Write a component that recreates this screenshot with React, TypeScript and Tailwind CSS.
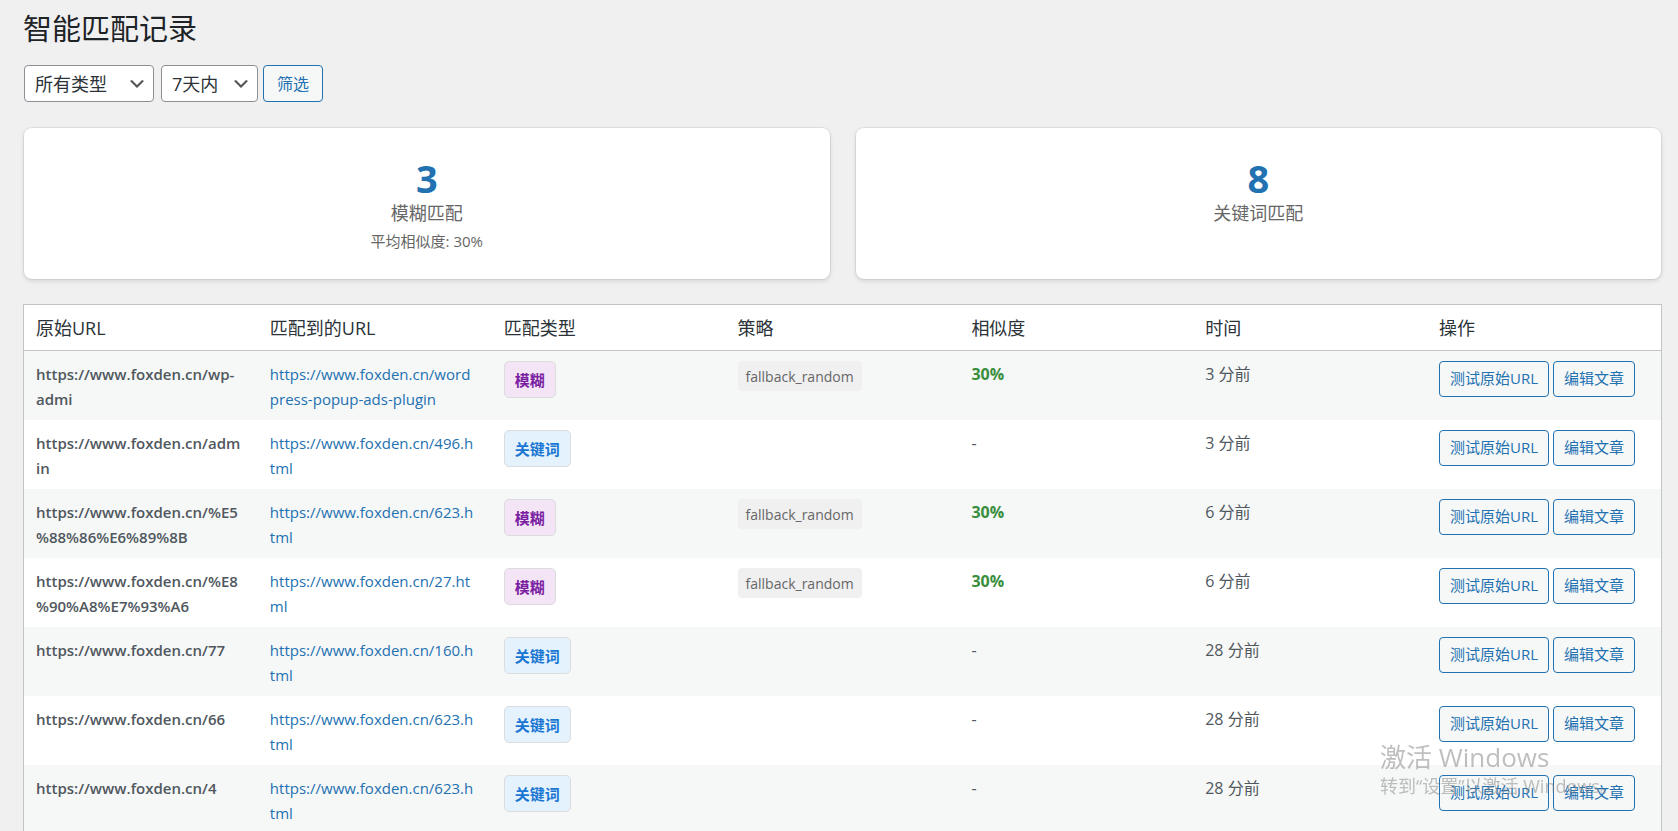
import { useState } from "react";

type MatchType = "fuzzy" | "keyword";

interface MatchRecord {
  id: number;
  source: string;
  target: string;
  type: MatchType;
  strategy?: string;
  similarity?: number;
  time: string;
}

const BASE = "https://www.foxden.cn";

const RECORDS: MatchRecord[] = [
  { id: 1, source: `${BASE}/wp-admi`, target: `${BASE}/wordpress-popup-ads-plugin`, type: "fuzzy", strategy: "fallback_random", similarity: 30, time: "3 分前" },
  { id: 2, source: `${BASE}/admin`, target: `${BASE}/496.html`, type: "keyword", time: "3 分前" },
  { id: 3, source: `${BASE}/%E5%88%86%E6%89%8B`, target: `${BASE}/623.html`, type: "fuzzy", strategy: "fallback_random", similarity: 30, time: "6 分前" },
  { id: 4, source: `${BASE}/%E8%90%A8%E7%93%A6`, target: `${BASE}/27.html`, type: "fuzzy", strategy: "fallback_random", similarity: 30, time: "6 分前" },
  { id: 5, source: `${BASE}/77`, target: `${BASE}/160.html`, type: "keyword", time: "28 分前" },
  { id: 6, source: `${BASE}/66`, target: `${BASE}/623.html`, type: "keyword", time: "28 分前" },
  { id: 7, source: `${BASE}/4`, target: `${BASE}/623.html`, type: "keyword", time: "28 分前" },
];

const COLUMNS = ["原始URL", "匹配到的URL", "匹配类型", "策略", "相似度", "时间", "操作"];

const TYPE_BADGE: Record<MatchType, { label: string; className: string }> = {
  fuzzy: { label: "模糊", className: "bg-[#f3e5f5] text-[#7b1fa2]" },
  keyword: { label: "关键词", className: "bg-[#e3f2fd] text-[#1976d2]" },
};

interface FilterSelectProps {
  label: string;
  value: string;
  options: { value: string; label: string }[];
  className: string;
  onChange: (value: string) => void;
}

function FilterSelect({ label, value, options, className, onChange }: FilterSelectProps) {
  return (
    <div className={`relative ${className}`}>
      <select
        aria-label={label}
        value={value}
        onChange={(e) => onChange(e.target.value)}
        className="h-[37px] w-full appearance-none rounded-[4px] border border-[#8c8f94] bg-white pt-[2px] pl-[10px] pr-8 text-[18px] text-[#2c3338]"
      >
        {options.map((o) => (
          <option key={o.value} value={o.value}>{o.label}</option>
        ))}
      </select>
      <svg viewBox="0 0 20 20" className="pointer-events-none absolute right-[7px] top-[9px] size-5 fill-[#555]">
        <path d="M5 6l5 5 5-5 2 1-7 7-7-7 2-1z" />
      </svg>
    </div>
  );
}

function StatCard({ value, label, note }: { value: number; label: string; note?: string }) {
  return (
    <div className="min-h-[151px] rounded-[8px] bg-white pt-[29px] text-center text-[#666] shadow-[0_0_0_1px_rgba(0,0,0,0.06),0_2px_5px_rgba(0,0,0,0.12)]">
      <div className="text-[38px] leading-[42px] font-bold text-[#2271b1]">{value}</div>
      <div className="text-[18px] leading-[28px]">{label}</div>
      {note && <div className="mt-[2px] text-[15px] leading-[25px]">{note}</div>}
    </div>
  );
}

function ActionLink({ href, children }: { href: string; children: string }) {
  return (
    <a
      href={href}
      className="h-9 rounded-[4px] border border-[#2271b1] bg-[#f6f7f7] px-[10px] text-[15px] leading-8 whitespace-nowrap text-[#2271b1]"
    >
      {children}
    </a>
  );
}

export default function App() {
  const [type, setType] = useState("all");
  const [days, setDays] = useState("7");

  return (
    <div className="min-h-screen bg-[#f0f0f1] pl-[23px] pr-4 font-['Open_Sans','Noto_Sans_CJK_SC',sans-serif] text-[#3c434a]">
      <h1 className="pt-[10px] text-[29px] leading-[38px] text-[#1d2327]">智能匹配记录</h1>

      <form className="mt-[17px] flex pl-px" onSubmit={(e) => e.preventDefault()}>
        <FilterSelect
          label="匹配类型"
          value={type}
          onChange={setType}
          className="mr-[7px] w-[130px]"
          options={[
            { value: "all", label: "所有类型" },
            { value: "fuzzy", label: "模糊" },
            { value: "keyword", label: "关键词" },
          ]}
        />
        <FilterSelect
          label="时间范围"
          value={days}
          onChange={setDays}
          className="mr-[5px] w-[97px]"
          options={[
            { value: "7", label: "7天内" },
            { value: "30", label: "30天内" },
          ]}
        />
        <button type="submit" className="h-[37px] w-[60px] rounded-[4px] border border-[#2271b1] bg-[#f6f7f7] text-[16px] text-[#2271b1]">
          筛选
        </button>
      </form>

      <div className="mt-[26px] grid grid-cols-2 gap-[26px] px-px">
        <StatCard value={3} label="模糊匹配" note="平均相似度: 30%" />
        <StatCard value={8} label="关键词匹配" />
      </div>

      <div className="mt-[25px] border border-[#c3c4c7] bg-white shadow-[0_1px_1px_rgba(0,0,0,0.04)]">
        <table className="w-full table-fixed text-left">
          <thead>
            <tr className="border-b border-[#c3c4c7]">
              {COLUMNS.map((name) => (
                <th key={name} scope="col" className="h-[45px] px-3 pt-[2px] text-[18px] leading-[25px] font-normal text-[#2c3338]">
                  {name}
                </th>
              ))}
            </tr>
          </thead>
          <tbody className="text-[16px] leading-[25px] text-[#50575e]">
            {RECORDS.map((r) => (
              <tr key={r.id} className="align-top odd:bg-[#f6f7f7]">
                <td className="pt-[11px] pr-4 pb-2 pl-3 text-[15px] font-semibold wrap-break-word">{r.source}</td>
                <td className="pt-[11px] pr-4 pb-2 pl-3 text-[15px] wrap-break-word">
                  <a href={r.target} className="text-[#2271b1]">{r.target}</a>
                </td>
                <td className="px-3 pt-[10px]">
                  <span className={`block h-[37px] w-fit rounded-[5px] border border-[#dcdcde] px-[10px] text-[15px] leading-[36px] font-semibold ${TYPE_BADGE[r.type].className}`}>
                    {TYPE_BADGE[r.type].label}
                  </span>
                </td>
                <td className="px-3 pt-[10px]">
                  {r.strategy && (
                    <span className="block h-[30px] w-fit rounded-[4px] bg-[#f0f0f1] px-2 text-[14px] leading-8 text-[#666]">
                      {r.strategy}
                    </span>
                  )}
                </td>
                <td className="px-3 pt-[11px]">
                  {r.similarity ? <span className="font-bold text-[#388e3c]">{r.similarity}%</span> : "-"}
                </td>
                <td className="px-3 pt-[11px]">{r.time}</td>
                <td className="px-3 pt-[10px]">
                  <div className="flex gap-1">
                    <ActionLink href={r.source}>测试原始URL</ActionLink>
                    <ActionLink href={`#edit-${r.id}`}>编辑文章</ActionLink>
                  </div>
                </td>
              </tr>
            ))}
          </tbody>
        </table>
      </div>

      {/* system activation notice floating over the page */}
      <div className="pointer-events-none fixed right-[67px] bottom-[33px] w-[231px] whitespace-nowrap text-[#808080]/50">
        <p className="text-[26px] leading-[34px]">激活 Windows</p>
        <p className="text-[18px] leading-6">转到“设置”以激活 Windows。</p>
      </div>
    </div>
  );
}
